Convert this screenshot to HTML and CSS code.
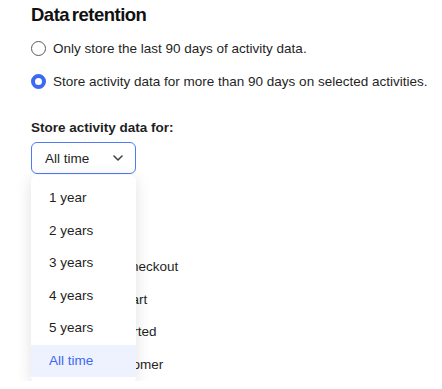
FILE: index.html
```html
<!DOCTYPE html>
<html lang="en">
<head>
  <meta charset="UTF-8">
  <meta name="viewport" content="width=device-width, initial-scale=1.0">
  <title>Data retention</title>
  <link rel="stylesheet" href="styles.css">
</head>
<body>
  <section class="retention">
    <h2 class="title">Data retention</h2>

    <div class="options">
      <label class="option">
        <span class="radio"></span>
        Only store the last 90 days of activity data.
      </label>
      <label class="option">
        <span class="radio checked"></span>
        Store activity data for more than 90 days on selected activities.
      </label>
    </div>

    <div class="field-label">Store activity data for:</div>

    <div class="select-wrap">
      <div class="select">
        <span>All time</span>
        <svg class="chevron" width="10" height="6" viewBox="0 0 10 6">
          <polyline points="1,1 5,5 9,1" fill="none" stroke="#444" stroke-width="1.6" stroke-linecap="round" stroke-linejoin="round"/>
        </svg>
      </div>

      <ul class="menu">
        <li>1 year</li>
        <li>2 years</li>
        <li>3 years</li>
        <li>4 years</li>
        <li>5 years</li>
        <li class="active">All time</li>
      </ul>
    </div>

    <div class="activities">
      <label class="activity"><span class="check"></span>Started checkout</label>
      <label class="activity"><span class="check"></span>Viewed cart</label>
      <label class="activity"><span class="check"></span>Order started</label>
      <label class="activity"><span class="check"></span>New customer</label>
    </div>
  </section>
</body>
</html>
```

FILE: styles.css
```css
* {
  margin: 0;
  padding: 0;
  box-sizing: border-box;
}

body {
  background: #fff;
  color: #1f1f1f;
  font-family: 'Liberation Sans', Arial, sans-serif;
  font-size: 13.5px;
  padding-left: 31px;
  overflow: hidden;
}

.title {
  padding-top: 4px;
  font-size: 18.5px;
  line-height: 22px;
  font-weight: 700;
  letter-spacing: -0.5px;
  word-spacing: -2px;
  color: #111;
}

.options {
  margin-top: 6px;
}

.option {
  display: flex;
  align-items: center;
  gap: 7px;
  height: 33px;
}

.radio {
  width: 15px;
  height: 15px;
  border: 1.5px solid #5a5a5a;
  border-radius: 50%;
  flex-shrink: 0;
}

.radio.checked {
  border: 4.5px solid #3b69f2;
  background: #fff;
}

.field-label {
  margin-top: 21px;
  font-weight: 700;
  line-height: 18px;
}

.select-wrap {
  position: relative;
  margin-top: 5px;
  width: 105px;
}

.select {
  display: flex;
  align-items: center;
  justify-content: space-between;
  height: 32px;
  padding: 0 12px 0 13px;
  border: 1px solid #4d7bf4;
  border-radius: 6px;
}

.menu {
  position: absolute;
  top: 33px;
  left: 0;
  width: 105px;
  list-style: none;
  padding: 7px 0 6px;
  background: #fff;
  border-radius: 6px;
  box-shadow: 0 3px 16px rgba(0, 0, 0, 0.12);
  z-index: 2;
}

.menu li {
  height: 32.5px;
  line-height: 32.5px;
  padding-left: 18px;
}

.menu li.active {
  background: #edf2fe;
  color: #3b69f2;
}

.activities {
  margin-top: 76px;
  padding-left: 22px;
}

.activity {
  display: flex;
  align-items: center;
  gap: 8px;
  height: 32.7px;
}

.check {
  width: 16px;
  height: 16px;
  border: 1.5px solid #5a5a5a;
  border-radius: 3px;
}
```
